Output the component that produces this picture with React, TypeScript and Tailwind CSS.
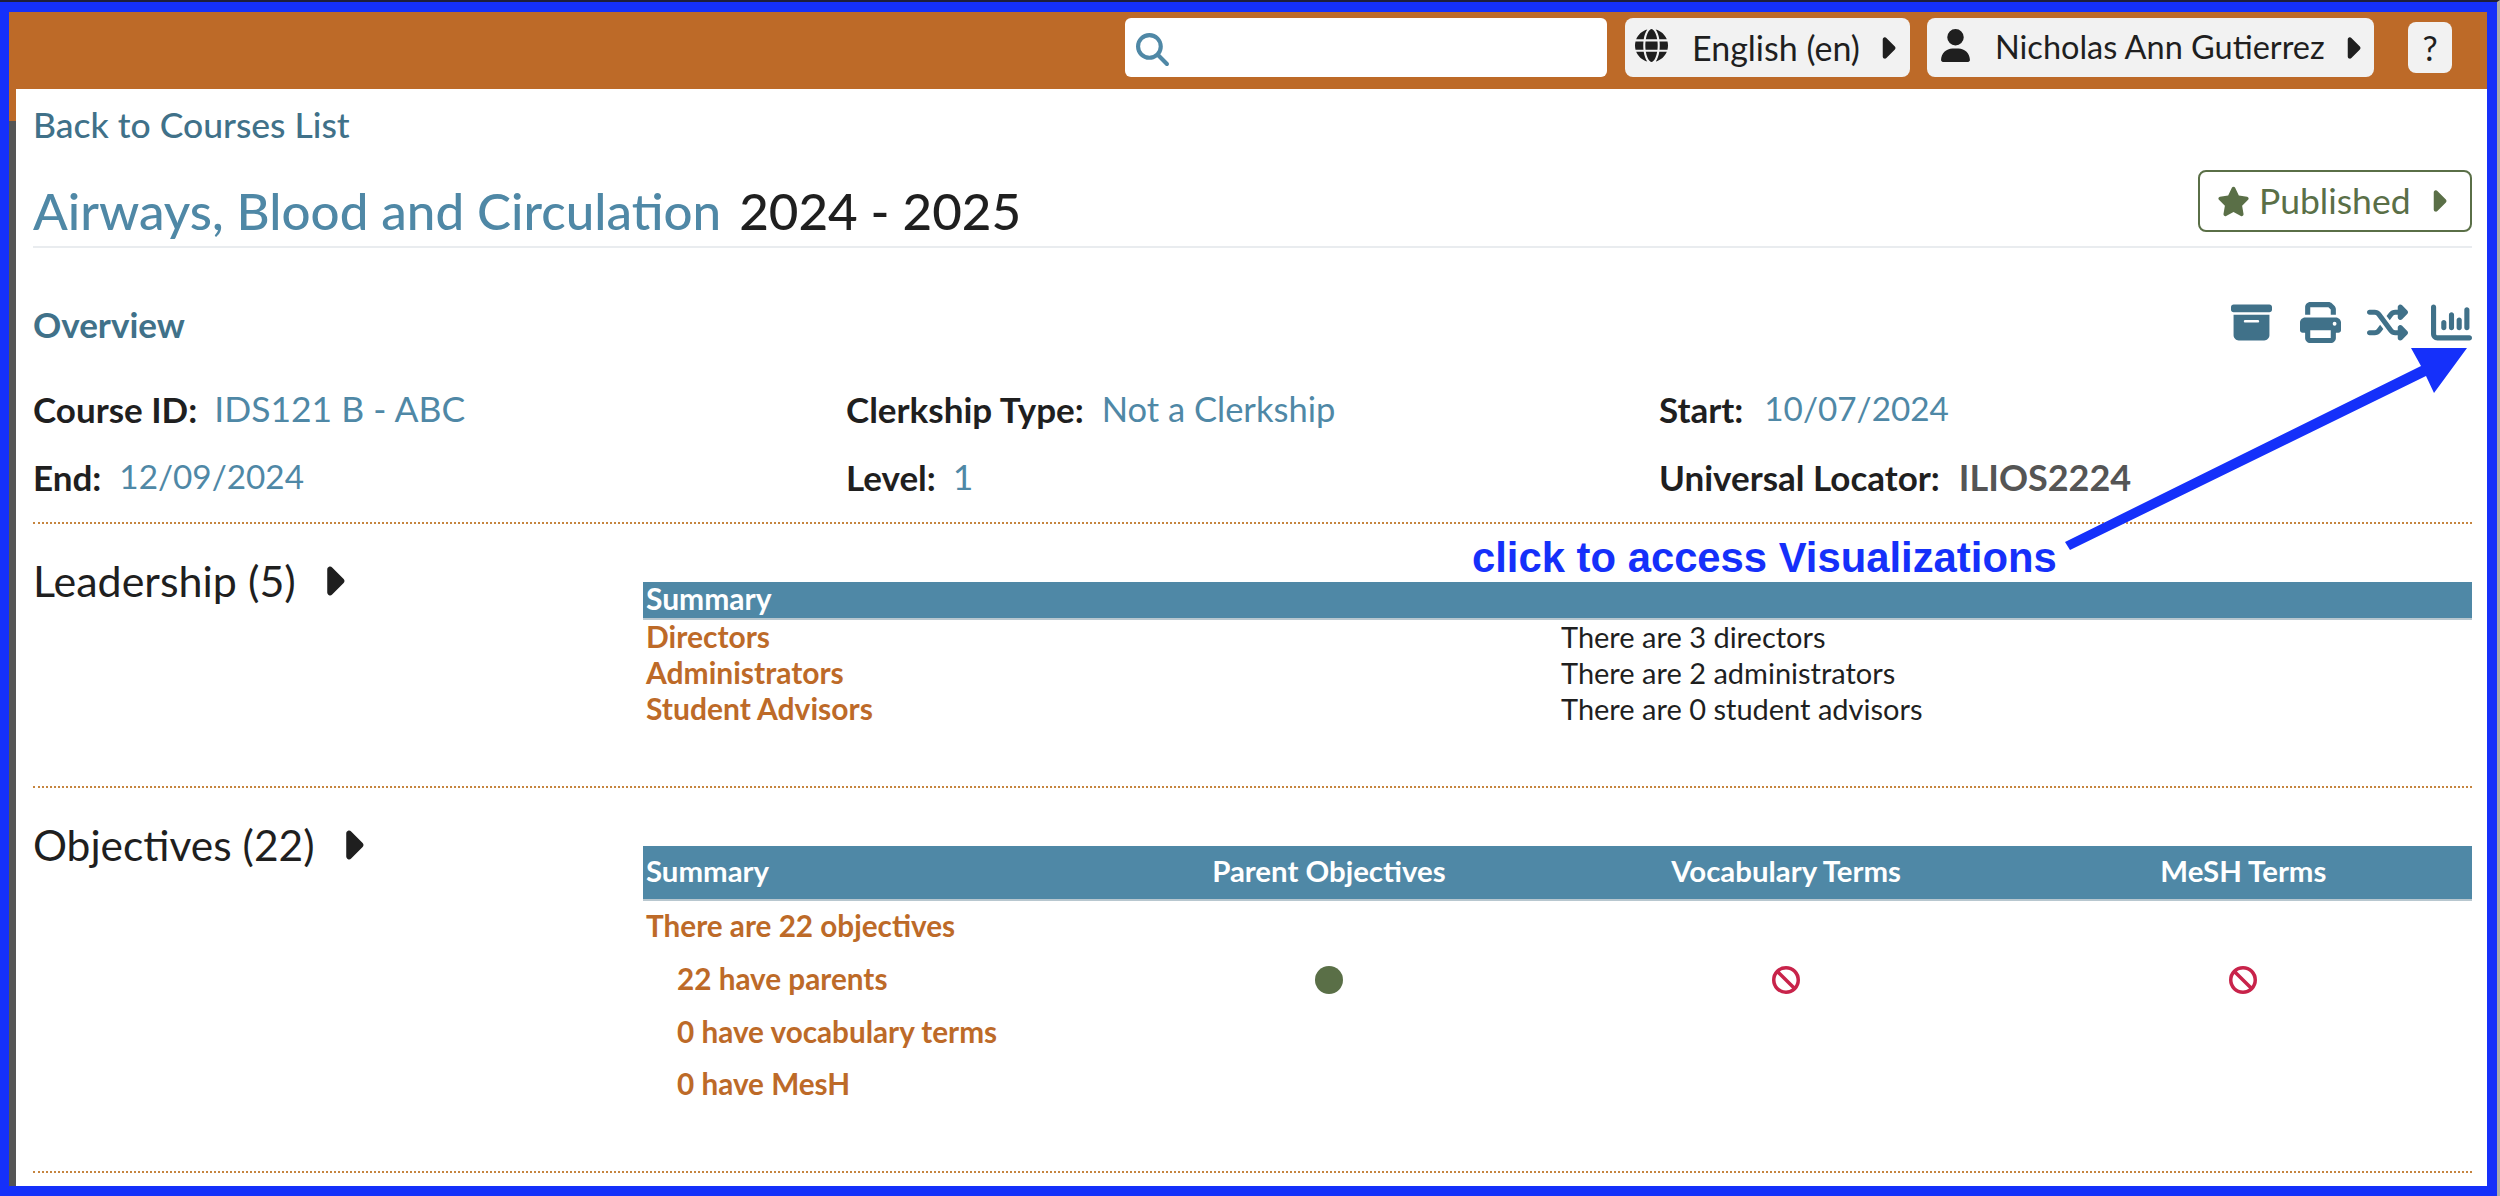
import React from "react";
import { FaBoxArchive, FaPrint, FaShuffle, FaChartColumn, FaMagnifyingGlass, FaGlobe, FaUser, FaStar, FaCaretRight, FaCircle, FaBan } from "react-icons/fa6";

const font = "font-['Lato','Noto_Sans',sans-serif]";

function Field({ label, value, valueClass }: { label: string; value: string; valueClass: string }) {
  return (
    <div className="flex items-center h-[68px] text-[35px] -translate-y-[1px]">
      <span className="font-bold text-[#1f1f1f]">{label}</span>
      <span className={valueClass}>{value}</span>
    </div>
  );
}

function Pill({ icon, text, size }: { icon: React.ReactNode; text: string; size: string }) {
  return (
    <div className={`h-[59px] flex items-center whitespace-nowrap bg-[#f2f2f2] rounded-[8px] pl-[10px] text-[#1f1f1f] ${size}`}>
      {icon}
      <span>{text}</span>
      <FaCaretRight className="ml-[10px] text-[34px]" />
    </div>
  );
}

export default function App() {
  return (
    <div className={`${font} relative w-[2500px] h-[1196px] bg-[#1530fa] border-t-2 border-[#1e1e3c] border-r-[3px] border-r-[#aaaaaa] pt-[10px] pl-[9px] pr-[10px] pb-[10px] flex flex-col overflow-hidden`}>
      <header className="h-[77px] shrink-0 bg-[#bd6a28] flex items-start justify-end pr-[35px] pt-[6px]">
        <div className="w-[482px] h-[59px] bg-white rounded-[6px] flex items-center pl-[11px] mr-[18px]">
          <FaMagnifyingGlass className="text-[33px] text-[#4f88a6] mt-[4px]" />
        </div>
        <div className="w-[285px] mr-[17px]">
          <Pill size="text-[34px]" icon={<FaGlobe className="text-[33px] mr-[24px] -mt-[4px]" />} text="English (en)" />
        </div>
        <div className="w-[447px] mr-[34px]">
          <Pill size="text-[32.5px]" icon={<FaUser className="text-[33px] mr-[23px] ml-[2px] -mt-[4px]" />} text="Nicholas Ann Gutierrez" />
        </div>
        <div className="w-[44px] h-[51px] mt-[4px] bg-[#f2f2f2] rounded-[8px] flex items-center justify-center text-[34px] text-[#1f1f1f]">?</div>
      </header>
      <div className="flex-1 flex">
        <div className="w-[7px] flex flex-col">
          <div className="h-[32px] bg-[#bd6a28]" />
          <div className="flex-1 bg-[#555555]" />
        </div>
        <main className="flex-1 bg-white pl-[17px] pr-[15px]">
          <div className="h-[72px] flex items-center text-[35.5px] font-medium text-[#407189]">Back to Courses List</div>
          <div className="h-[87px] border-b-2 border-[#e9ecef] flex items-start justify-between">
            <h1 className="flex items-center h-[76px] mt-[12px] text-[51.1px] font-medium">
              <span className="text-[#4f88a6]">Airways, Blood and Circulation</span>
              <span className="ml-[18px] text-[#1f1f1f]">2024 - 2025</span>
            </h1>
            <div className="mt-[9px] w-[274px] h-[62px] border-2 border-[#5a6f47] rounded-[8px] flex items-center pl-[17px] text-[35.5px] text-[#5a6f47]">
              <FaStar className="text-[33px] mr-[9px]" />
              <span>Published</span>
              <FaCaretRight className="ml-[10px] text-[34px]" />
            </div>
          </div>
          <div className="mt-[47px] h-[58px] flex items-center justify-between">
            <span className="text-[35px] font-bold text-[#407189]">Overview</span>
            <div className="flex items-center text-[#407189] text-[41px] -mt-[4px]">
              <FaBoxArchive />
              <FaPrint className="ml-[28px]" />
              <FaShuffle className="ml-[26px]" />
              <FaChartColumn className="ml-[23px]" />
            </div>
          </div>
          <div className="mt-[23px] grid grid-cols-3 border-b-2 border-dotted border-[#c6853f] pb-[10px]">
            <Field label="Course ID:" value="IDS121 B - ABC" valueClass="ml-[17px] text-[#4f88a6] text-[35.5px]" />
            <Field label="Clerkship Type:" value="Not a Clerkship" valueClass="ml-[18px] text-[#4f88a6] text-[34.5px]" />
            <Field label="Start:" value="10/07/2024" valueClass="ml-[21px] text-[#4f88a6] text-[33.3px]" />
            <Field label="End:" value="12/09/2024" valueClass="ml-[18px] text-[#4f88a6] text-[33.3px]" />
            <Field label="Level:" value="1" valueClass="ml-[17px] text-[#4f88a6] text-[35.5px]" />
            <Field label="Universal Locator:" value="ILIOS2224" valueClass="ml-[19px] font-bold text-[#555555] text-[36px]" />
          </div>
          <section className="h-[264px] flex border-b-2 border-dotted border-[#c6853f]">
            <div className="w-[610px] pt-[29px] flex items-start">
              <div className="h-[56px] flex items-center text-[43px] text-[#1f1f1f]">
                Leadership (5)
                <FaCaretRight className="ml-[14px] text-[46px]" />
              </div>
            </div>
            <div className="flex-1 pt-[58px] text-[29px]">
              <div className="h-[38px] bg-[#4f88a6] border-b-2 border-[#b8c7cf] text-white font-bold text-[30px] pl-[3px] flex items-center leading-none pb-[4px]">Summary</div>
              <div className="-mt-[6px]">
                {[
                  ["Directors", "There are 3 directors"],
                  ["Administrators", "There are 2 administrators"],
                  ["Student Advisors", "There are 0 student advisors"],
                ].map(([a, b]) => (
                  <div key={a} className="grid grid-cols-2 h-[36px] items-center pl-[3px]">
                    <span className="font-bold text-[30px] text-[#bd6a28]">{a}</span>
                    <span className="pl-[2px] text-[#1f1f1f]">{b}</span>
                  </div>
                ))}
              </div>
            </div>
          </section>
          <section className="h-[385px] flex border-b-2 border-dotted border-[#c6853f]">
            <div className="w-[610px] pt-[29px] flex items-start">
              <div className="h-[56px] flex items-center text-[42.5px] text-[#1f1f1f]">
                Objectives (22)
                <FaCaretRight className="ml-[14px] text-[46px]" />
              </div>
            </div>
            <div className="flex-1 pt-[58px] text-[29.7px]">
              <div className="h-[55px] grid grid-cols-4 items-center bg-[#4f88a6] border-b-2 border-[#b8c7cf] text-white font-bold text-center pb-[2px] text-[29.4px]">
                <span className="text-left pl-[3px]">Summary</span>
                <span>Parent Objectives</span>
                <span>Vocabulary Terms</span>
                <span>MeSH Terms</span>
              </div>
              <div>
                <div className="h-[52.5px] flex items-center pl-[3px] font-bold text-[#bd6a28] -translate-y-[1px]">There are 22 objectives</div>
                <div className="h-[52.5px] grid grid-cols-4 items-center font-bold text-[#bd6a28]">
                  <span className="pl-[34px]">22 have parents</span>
                  <FaCircle className="justify-self-center text-[28px] text-[#5a6f47]" />
                  <FaBan className="justify-self-center text-[28px] text-[#c8234a]" />
                  <FaBan className="justify-self-center text-[28px] text-[#c8234a]" />
                </div>
                <div className="h-[52.5px] flex items-center pl-[34px] font-bold text-[#bd6a28]">0 have vocabulary terms</div>
                <div className="h-[52.5px] flex items-center pl-[34px] font-bold text-[#bd6a28]">0 have MesH</div>
              </div>
            </div>
          </section>
        </main>
      </div>
      <svg className="absolute left-0 top-[-2px] pointer-events-none" width="2500" height="1196" viewBox="0 0 2500 1196">
        <polygon points="2467,348 2411,348 2421,366 2065,542 2070,550 2426,376 2434,393" fill="#1530fa" />
      </svg>
      <span className="absolute left-[1472px] top-[534px] font-['Liberation_Sans',sans-serif] font-bold text-[41.8px] leading-[44px] text-[#1530fa] whitespace-nowrap">click to access Visualizations</span>
    </div>
  );
}
